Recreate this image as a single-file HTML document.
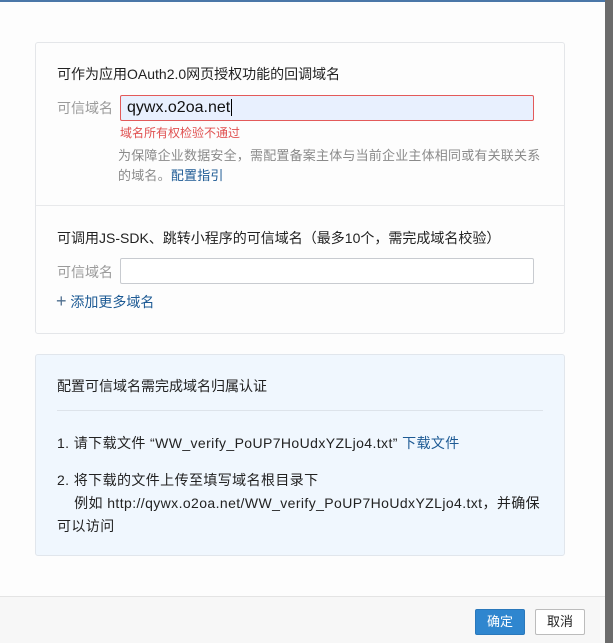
<!DOCTYPE html>
<html><head><meta charset="utf-8"><style>
*{margin:0;padding:0;box-sizing:border-box}
body{width:613px;height:643px;background:#fdfdfd;font-family:"Liberation Sans","Noto Sans CJK SC",sans-serif;font-size:14px;color:#222;position:relative;overflow:hidden}
.a{position:absolute;white-space:nowrap}
.top{left:0;top:0;width:605px;height:2px;background:#4a77a8}
.strip{left:605px;top:0;width:8px;height:643px;background:#6b6b6b}
.card{left:35px;top:42px;width:530px;height:292px;border:1px solid #e4e6e9;border-radius:3px;background:#fdfdfd}
.card2{left:35px;top:354px;width:530px;height:202px;border:1px solid #e1e6ec;border-radius:3px;background:#f0f7fe}
.lbl{color:#9a9a9a}
.inp{border:1px solid #c8cbd0;border-radius:2px;background:#fff}
.blue{color:#1d5a94}
.btn{height:26px;line-height:24px;text-align:center;border-radius:2px;font-size:13px}
.ls{letter-spacing:0.4px}
</style></head><body>
<div class="a top"></div>
<div class="a strip"></div>
<div class="a card"></div>
<div class="a" style="left:36px;top:205px;width:528px;height:1px;background:#e8e9eb"></div>
<div class="a" style="left:57px;top:64px">可作为应用OAuth2.0网页授权功能的回调域名</div>
<div class="a lbl" style="left:57px;top:98px">可信域名</div>
<div class="a inp" style="left:120px;top:95px;width:414px;height:26px;border-color:#e35a5a;background:#e8f0fe;font-size:16px;line-height:24px;padding-left:6px;color:#111">qywx.o2oa.net<span style="border-left:1px solid #000;margin-left:1px"></span></div>
<div class="a" style="left:120px;top:124px;font-size:12px;color:#e05050">域名所有权检验不通过</div>
<div class="a" style="left:118px;top:146px;color:#8a8a8a;line-height:20px;font-size:13px;letter-spacing:0.2px">为保障企业数据安全，需配置备案主体与当前企业主体相同或有关联关系<br>的域名。<span class="blue">配置指引</span></div>
<div class="a" style="left:57px;top:228px">可调用JS-SDK、跳转小程序的可信域名（最多10个，需完成域名校验）</div>
<div class="a lbl" style="left:57px;top:262px">可信域名</div>
<div class="a inp" style="left:120px;top:258px;width:414px;height:26px"></div>
<div class="a blue" style="left:56px;top:292px"><span style="font-size:18px;line-height:14px;color:#4f6f8f">+</span> 添加更多域名</div>
<div class="a card2"></div>
<div class="a" style="left:57px;top:376px">配置可信域名需完成域名归属认证</div>
<div class="a" style="left:57px;top:410px;width:486px;height:1px;background:#dde3ea"></div>
<div class="a ls" style="left:57px;top:433px">1. 请下载文件 “WW_verify_PoUP7HoUdxYZLjo4.txt” <span class="blue">下载文件</span></div>
<div class="a ls" style="left:57px;top:469px;line-height:23px">2. 将下载的文件上传至填写域名根目录下<br>&nbsp;&nbsp;&nbsp;&nbsp;例如 http://qywx.o2oa.net/WW_verify_PoUP7HoUdxYZLjo4.txt，并确保<br>可以访问</div>
<div class="a" style="left:0;top:596px;width:605px;height:47px;background:#f7f7f7;border-top:1px solid #e4e4e4"></div>
<div class="a btn" style="left:475px;top:609px;width:50px;background:#2f86cf;border:1px solid #2a78bb;color:#fff">确定</div>
<div class="a btn" style="left:535px;top:609px;width:50px;background:#fff;border:1px solid #bcbcbc;color:#222">取消</div>
</body></html>
